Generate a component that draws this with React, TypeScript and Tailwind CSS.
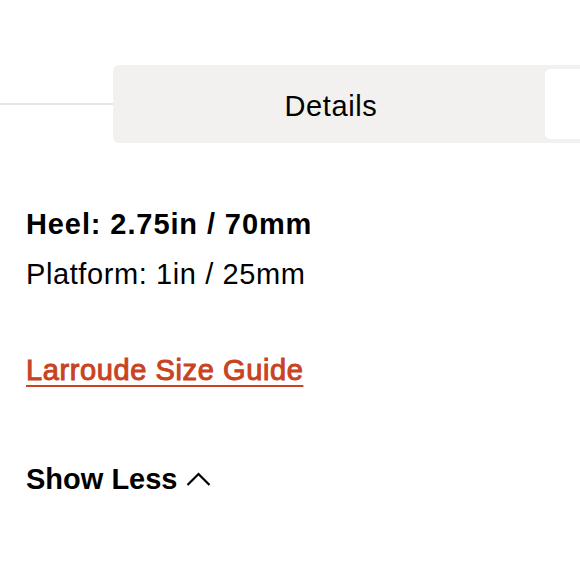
export default function App() {
    return (
        <div className="w-[580px] h-[580px] overflow-hidden bg-white text-black font-['Liberation_Sans',Arial,sans-serif] tracking-[0.6px]">
            {/* Tabs */}
            <div className="flex items-center pt-[65px]">
                <div className="w-[113px] h-[2px] bg-[#e6e5e3]" />
                <div className="flex-1 flex h-[78px] bg-[#f2f1ef] rounded-l-[6px] p-[4px] pr-0">
                    <div className="w-[428px] flex items-center justify-center pt-[4px] text-[29px] leading-none">
                        Details
                    </div>
                    <div className="flex-1 bg-white rounded-l-[5px]" />
                </div>
            </div>

            {/* Content */}
            <div className="pl-[26px] pt-[56px] flex flex-col text-[29px] leading-[50px]">
                <p className="font-bold tracking-[0.9px]">Heel: 2.75in / 70mm</p>
                <p>Platform: 1in / 25mm</p>
                <a
                    href="#"
                    className="mt-[46px] self-start text-[#c8431f] [-webkit-text-stroke:1px_#c8431f] underline decoration-2 underline-offset-[5px] leading-[50px]"
                >
                    Larroude Size Guide
                </a>
                <button className="mt-[59px] self-start flex items-center gap-[8px] font-bold tracking-normal leading-[50px]">
                    Show Less
                    <svg width="25" height="16" viewBox="0 0 25 16" fill="none" stroke="black" strokeWidth="2.2">
                        <path d="M1.5 14 L12.5 3 L23.5 14" />
                    </svg>
                </button>
            </div>
        </div>
    );
}
